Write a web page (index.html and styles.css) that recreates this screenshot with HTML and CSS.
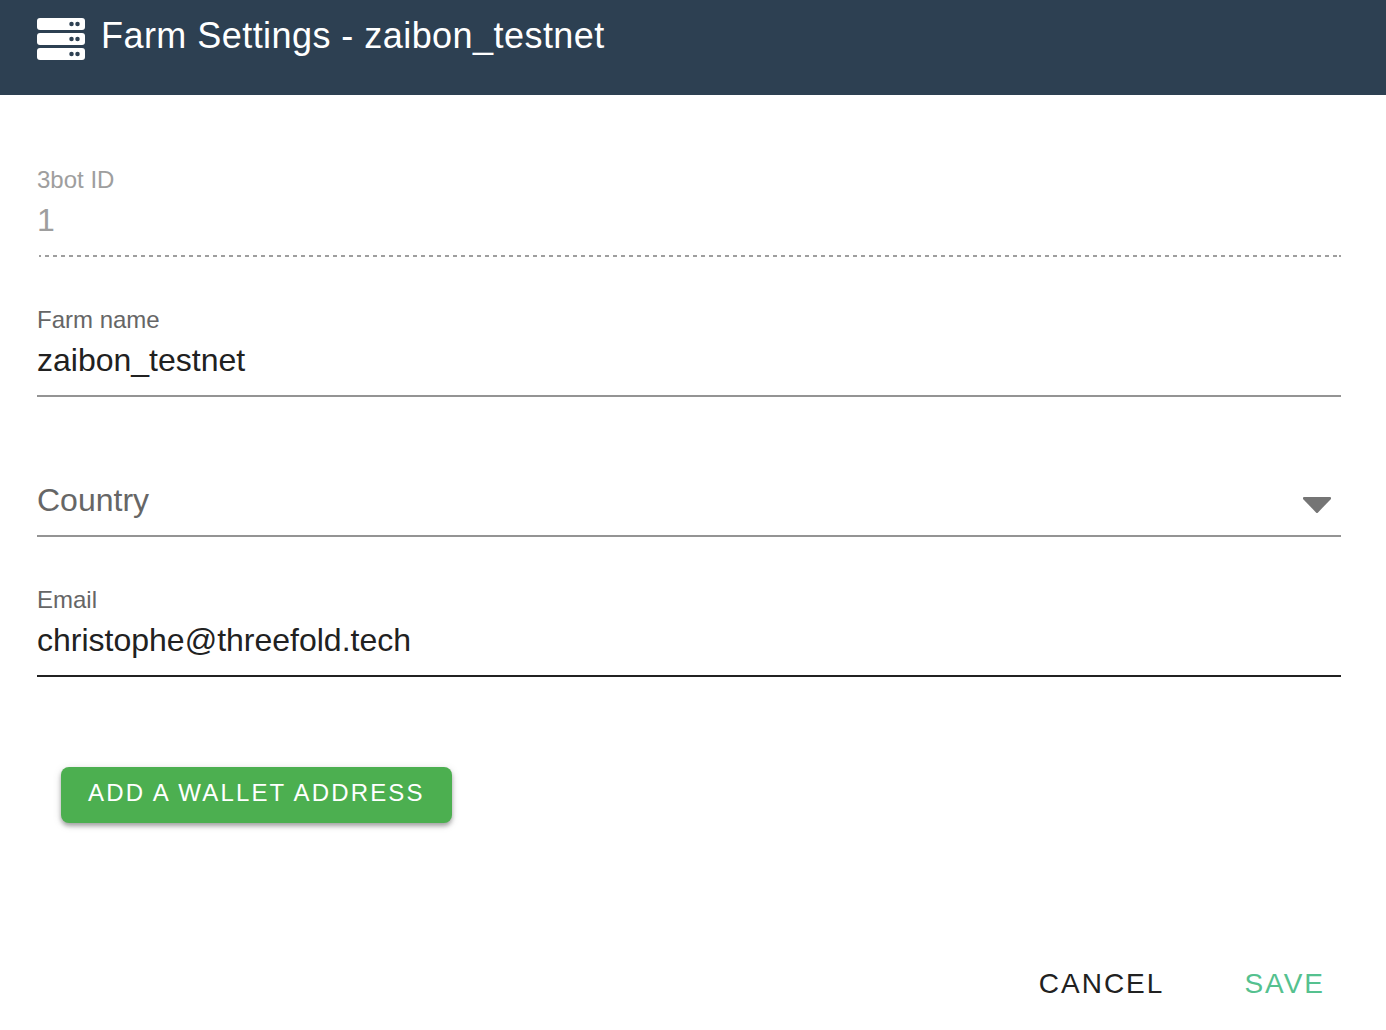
FILE: index.html
```html
<!DOCTYPE html>
<html lang="en">
<head>
<meta charset="utf-8">
<title>Farm Settings</title>
<link rel="stylesheet" href="styles.css">
</head>
<body>
<form class="dialog">
  <header class="dialog-header">
    <svg class="server-icon" viewBox="0 0 48 42" aria-hidden="true">
      <g fill="#fff"><rect width="48" height="12" rx="3"/><rect y="15" width="48" height="12" rx="3"/><rect y="30" width="48" height="12" rx="3"/></g>
      <g fill="#2d4052"><circle cx="34.5" cy="6" r="2.25"/><circle cx="40.5" cy="6" r="2.25"/><circle cx="34.5" cy="21" r="2.25"/><circle cx="40.5" cy="21" r="2.25"/><circle cx="34.5" cy="36" r="2.25"/><circle cx="40.5" cy="36" r="2.25"/></g>
    </svg>
    <h1 class="title">Farm Settings - zaibon_testnet</h1>
  </header>
  <main class="fields">
    <div class="field field-disabled">
      <label class="label" for="bot">3bot ID</label>
      <input class="control" id="bot" value="1" disabled>
      <svg class="dotted-line" aria-hidden="true"><line x1="8" y1="1" x2="100%" y2="1"/><rect x="2" width="2" height="2"/><rect x="100%" width="2" height="2" transform="translate(-2 0)"/></svg>
    </div>
    <div class="field">
      <label class="label" for="farm">Farm name</label>
      <input class="control" id="farm" value="zaibon_testnet">
    </div>
    <div class="field field-select">
      <select class="control" id="country" aria-label="Country"><option>Country</option></select>
      <svg class="arrow" viewBox="0 0 28 16" aria-hidden="true"><path d="M1 0H27Q28 0 28 1V2L15 15.4Q14 16.4 13 15.4L0 2V1Q0 0 1 0Z"/></svg>
    </div>
    <div class="field field-active">
      <label class="label" for="email">Email</label>
      <input class="control" id="email" type="email" value="christophe@threefold.tech">
    </div>
    <button class="wallet-button" type="button">ADD A WALLET ADDRESS</button>
  </main>
  <footer class="actions">
    <button class="action" type="button">CANCEL</button>
    <button class="action action-save" type="button">SAVE</button>
  </footer>
</form>
</body>
</html>
```
FILE: styles.css
```css
* { box-sizing: border-box; }
body { margin: 0; background: #fff; color: #212121; font-family: "Liberation Sans", Arial, sans-serif; }
button, input, select { font-family: inherit; color: inherit; }
.dialog-header { display: flex; align-items: flex-start; gap: 16px; padding: 16px 37px 35px; background: #2d4052; color: #fff; }
.server-icon { width: 48px; height: 42px; margin-top: 2px; flex: none; }
.title { margin: 0; font-size: 36px; line-height: 40px; font-weight: 400; letter-spacing: 0.0125em; }
.fields { display: flex; flex-direction: column; padding: 70px 45px 0 37px; }
.field { display: flex; flex-direction: column; position: relative; height: 92px; margin-bottom: 48px; border-bottom: 2px solid #949494; }
.label { font-size: 24px; line-height: 30px; color: #666; }
.control { width: 100%; height: 50px; padding: 0; border: 0; outline: 0; background: transparent; font-size: 32px; line-height: 40px; appearance: none; }
.field-disabled { border-bottom-color: transparent; }
.field-disabled .label, .field-disabled .control { color: #9e9e9e; }
.dotted-line { position: absolute; left: 0; bottom: -2px; width: 100%; height: 2px; fill: #9e9e9e; }
.dotted-line line { stroke: #9e9e9e; stroke-width: 2; stroke-dasharray: 4 4; }
.field-select { justify-content: flex-end; }
.field-select .control { height: 70px; color: #666; }
.arrow { position: absolute; right: 10px; bottom: 22px; width: 28px; height: 16px; fill: #757575; pointer-events: none; }
.field-active { border-bottom-color: #212121; }
.wallet-button { align-self: flex-start; height: 56px; margin: 42px 24px 0; padding: 0 27px 4px; border: 0; border-radius: 8px; background: #4caf50; color: #fff; font-size: 24px; letter-spacing: 0.09em; box-shadow: 0 3px 4px rgba(0,0,0,.3), 0 2px 10px rgba(0,0,0,.12); }
.actions { display: flex; justify-content: flex-end; gap: 48px; padding: 125px 45px 0; }
.action { height: 72px; padding: 0 16px; border: 0; background: transparent; font-size: 28px; letter-spacing: 2px; }
.action-save { color: #55c18f; }
```
